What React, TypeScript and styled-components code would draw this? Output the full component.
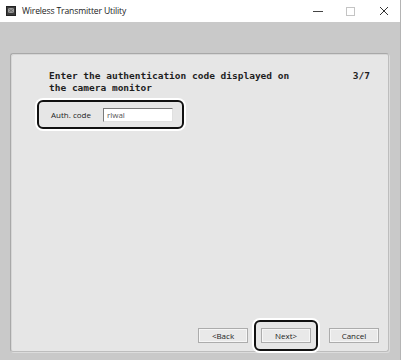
import React, { FC } from "react";
import styled, { createGlobalStyle } from "styled-components";

const GlobalStyle = createGlobalStyle`
  html, body {
    margin: 0;
    padding: 0;
    background: #c9c9c9;
  }
  #root {
    width: 401px;
    height: 360px;
  }
`;

const Window = styled.div`
  width: 401px;
  height: 360px;
  display: flex;
  flex-direction: column;
  background: #c9c9c9;
  box-sizing: border-box;
  border-right: 1px solid #b4b4b4;
  font-family: "Open Sans", "Noto Sans", sans-serif;
`;

const TitleBar = styled.div`
  height: 22px;
  flex: 0 0 22px;
  background: #ffffff;
  display: flex;
  align-items: center;
  padding-left: 6px;
`;

const AppIcon = styled.div`
  width: 10px;
  height: 10px;
  background: #3a3a3a;
  border: 1px solid #222;
  box-sizing: border-box;
  display: flex;
  align-items: center;
  justify-content: center;
  margin-right: 6px;
`;

const Title = styled.span`
  font-size: 8.6px;
  color: #1a1a1a;
  letter-spacing: -0.15px;
  flex: 1;
`;

const WinButton = styled.div`
  width: 33px;
  height: 22px;
  display: flex;
  align-items: center;
  justify-content: center;
  color: #333;
`;

const Body = styled.div`
  flex: 1;
  display: flex;
  padding: 31px 11px 8px 10px;
`;

const Panel = styled.div`
  flex: 1;
  display: flex;
  flex-direction: column;
  background: #e6e6e6;
  border-radius: 3px;
  border-top: 1px solid #a8a8a8;
  border-left: 1px solid #a8a8a8;
  border-right: 1px solid #bdbdbd;
  border-bottom: 1px solid #bdbdbd;
  box-shadow: inset 1px 1px 0 #d6d6d6, 1px 1px 0 #dcdcdc;
`;

const Header = styled.div`
  display: flex;
  justify-content: space-between;
  padding: 16px 18px 0 38px;
`;

const Heading = styled.div`
  font-family: "DejaVu Sans Mono", "Liberation Mono", monospace;
  font-weight: bold;
  font-size: 9.5px;
  line-height: 12px;
  color: #1e1e1e;
`;

const Step = styled(Heading)``;

const Highlight = styled.div`
  display: inline-flex;
  align-items: center;
  border: 2.5px solid #111;
  border-radius: 6px;
  box-shadow: 0 0 0 2px #ffffff;
  background: #e6e6e6;
`;

const AuthHighlight = styled(Highlight)`
  align-self: flex-start;
  margin: 6px 0 0 26px;
  width: 147px;
  height: 29px;
  box-sizing: border-box;
  padding-left: 12px;
`;

const Label = styled.span`
  font-size: 8px;
  color: #222;
  margin-right: 12px;
`;

const CodeInput = styled.div`
  width: 70px;
  height: 14px;
  box-sizing: border-box;
  background: #ffffff;
  border-top: 1px solid #7a7a7a;
  border-left: 1px solid #7a7a7a;
  border-right: 1px solid #e0e0e0;
  border-bottom: 1px solid #e0e0e0;
  font-size: 8px;
  line-height: 12px;
  color: #555;
  padding-left: 3px;
`;

const Footer = styled.div`
  margin-top: auto;
  display: flex;
  justify-content: flex-end;
  align-items: center;
  padding: 0 9px 0 0;
  height: 31px;
`;

const Button = styled.div<{ gap?: number }>`
  width: 50px;
  height: 15px;
  box-sizing: border-box;
  background: #e9e9e9;
  border: 1px solid #acacac;
  box-shadow: inset 0 0 0 1px #f6f6f6;
  font-size: 8px;
  color: #222;
  display: flex;
  align-items: center;
  justify-content: center;
  margin-left: ${({ gap }) => gap ?? 0}px;
`;

const NextHighlight = styled(Highlight)`
  width: 64px;
  height: 31px;
  box-sizing: border-box;
  justify-content: center;
  margin-left: 6px;
  align-self: flex-end;
`;

const App: FC = () => {
  return (
    <>
      <GlobalStyle />
      <Window>
        <TitleBar>
          <AppIcon>
            <svg width="8" height="8" viewBox="0 0 8 8">
              <rect x="1" y="1" width="6" height="5" fill="#9a9a9a" />
              <path d="M1 1 L7 6 M7 1 L1 6" stroke="#555" strokeWidth="0.7" />
            </svg>
          </AppIcon>
          <Title>Wireless Transmitter Utility</Title>
          <WinButton>
            <svg width="10" height="10" viewBox="0 0 10 10">
              <path d="M0 5.5 H10" stroke="#444" strokeWidth="1" />
            </svg>
          </WinButton>
          <WinButton>
            <svg width="9" height="9" viewBox="0 0 9 9">
              <rect x="0.5" y="0.5" width="8" height="8" fill="none" stroke="#c4c4c4" strokeWidth="1" />
            </svg>
          </WinButton>
          <WinButton>
            <svg width="10" height="10" viewBox="0 0 10 10">
              <path d="M1 1 L9 9 M9 1 L1 9" stroke="#333" strokeWidth="1" />
            </svg>
          </WinButton>
        </TitleBar>
        <Body>
          <Panel>
            <Header>
              <Heading>
                Enter the authentication code displayed on
                <br />
                the camera monitor
              </Heading>
              <Step>3/7</Step>
            </Header>
            <AuthHighlight>
              <Label>Auth. code</Label>
              <CodeInput>rlwal</CodeInput>
            </AuthHighlight>
            <Footer>
              <Button>&lt;Back</Button>
              <NextHighlight>
                <Button>Next&gt;</Button>
              </NextHighlight>
              <Button gap={11}>Cancel</Button>
            </Footer>
          </Panel>
        </Body>
      </Window>
    </>
  );
};

export default App;
